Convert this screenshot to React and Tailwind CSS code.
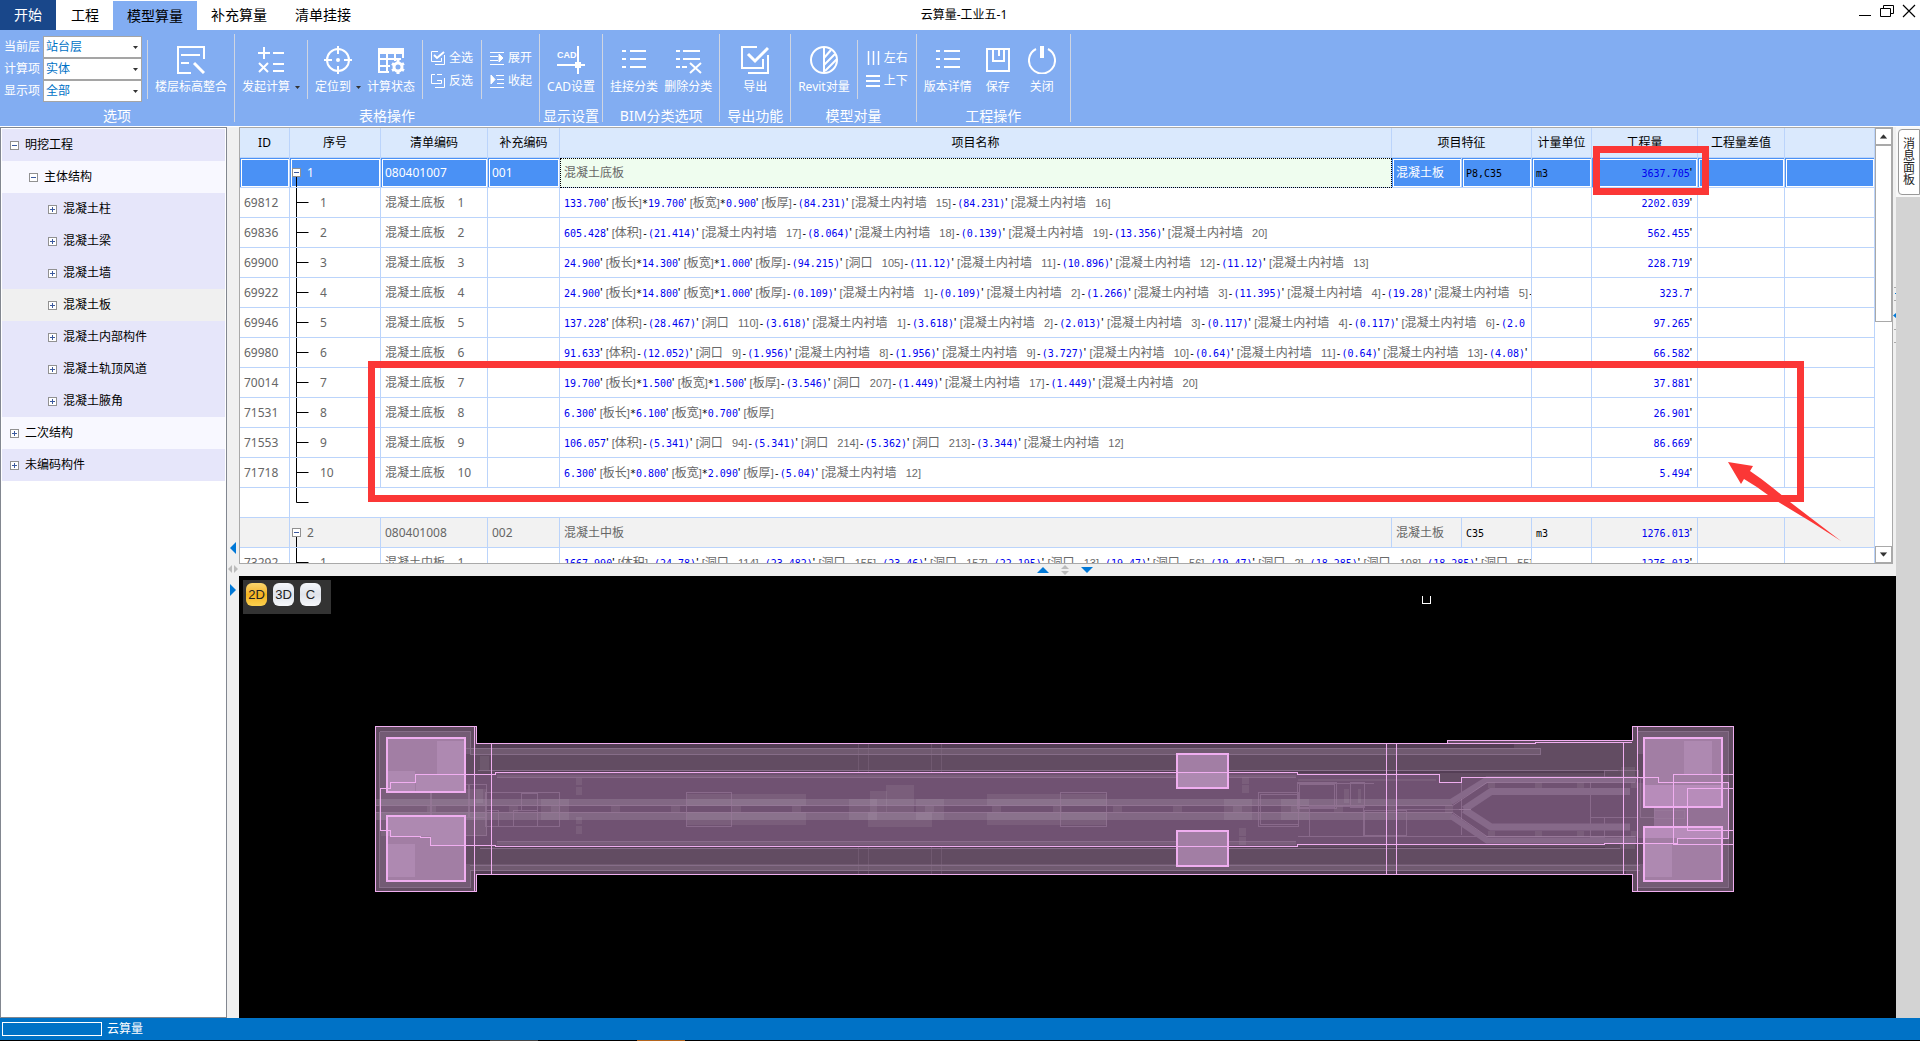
import { useState } from 'react';
import clsx from 'clsx';

const TABS = ['开始', '工程', '模型算量', '补充算量', '清单挂接'];

const FILTERS = [
  { id: 'floor', label: '当前层', value: '站台层' },
  { id: 'calc', label: '计算项', value: '实体' },
  { id: 'show', label: '显示项', value: '全部' },
];

const TREE = [
  { name: '明挖工程', level: 0, open: true, tone: 'dark' },
  { name: '主体结构', level: 1, open: true, tone: 'light' },
  { name: '混凝土柱', level: 2, tone: 'dark' },
  { name: '混凝土梁', level: 2, tone: 'dark' },
  { name: '混凝土墙', level: 2, tone: 'dark' },
  { name: '混凝土板', level: 2, tone: 'active' },
  { name: '混凝土内部构件', level: 2, tone: 'dark' },
  { name: '混凝土轨顶风道', level: 2, tone: 'dark' },
  { name: '混凝土腋角', level: 2, tone: 'dark' },
  { name: '二次结构', level: 0, tone: 'light' },
  { name: '未编码构件', level: 0, tone: 'dark' },
];

const SLABS = [
  {
    id: '69812',
    formula:
      "133.700'[板长]*19.700'[板宽]*0.900'[板厚]-(84.231)'[混凝土内衬墙 15]-(84.231)'[混凝土内衬墙 16]",
    amount: '2202.039',
  },
  {
    id: '69836',
    formula:
      "605.428'[体积]-(21.414)'[混凝土内衬墙 17]-(8.064)'[混凝土内衬墙 18]-(0.139)'[混凝土内衬墙 19]-(13.356)'[混凝土内衬墙 20]",
    amount: '562.455',
  },
  {
    id: '69900',
    formula:
      "24.900'[板长]*14.300'[板宽]*1.000'[板厚]-(94.215)'[洞口 105]-(11.12)'[混凝土内衬墙 11]-(10.896)'[混凝土内衬墙 12]-(11.12)'[混凝土内衬墙 13]",
    amount: '228.719',
  },
  {
    id: '69922',
    formula:
      "24.900'[板长]*14.800'[板宽]*1.000'[板厚]-(0.109)'[混凝土内衬墙 1]-(0.109)'[混凝土内衬墙 2]-(1.266)'[混凝土内衬墙 3]-(11.395)'[混凝土内衬墙 4]-(19.28)'[混凝土内衬墙 5]-",
    amount: '323.7',
  },
  {
    id: '69946',
    formula:
      "137.228'[体积]-(28.467)'[洞口 110]-(3.618)'[混凝土内衬墙 1]-(3.618)'[混凝土内衬墙 2]-(2.013)'[混凝土内衬墙 3]-(0.117)'[混凝土内衬墙 4]-(0.117)'[混凝土内衬墙 6]-(2.0",
    amount: '97.265',
  },
  {
    id: '69980',
    formula:
      "91.633'[体积]-(12.052)'[洞口 9]-(1.956)'[混凝土内衬墙 8]-(1.956)'[混凝土内衬墙 9]-(3.727)'[混凝土内衬墙 10]-(0.64)'[混凝土内衬墙 11]-(0.64)'[混凝土内衬墙 13]-(4.08)'",
    amount: '66.582',
  },
  {
    id: '70014',
    formula:
      "19.700'[板长]*1.500'[板宽]*1.500'[板厚]-(3.546)'[洞口 207]-(1.449)'[混凝土内衬墙 17]-(1.449)'[混凝土内衬墙 20]",
    amount: '37.881',
  },
  {
    id: '71531',
    formula: "6.300'[板长]*6.100'[板宽]*0.700'[板厚]",
    amount: '26.901',
  },
  {
    id: '71553',
    formula:
      "106.057'[体积]-(5.341)'[洞口 94]-(5.341)'[洞口 214]-(5.362)'[洞口 213]-(3.344)'[混凝土内衬墙 12]",
    amount: '86.669',
  },
  {
    id: '71718',
    formula: "6.300'[板长]*0.800'[板宽]*2.090'[板厚]-(5.04)'[混凝土内衬墙 12]",
    amount: '5.494',
  },
];

const MIDDLE_SLAB = {
  id: '73292',
  formula:
    "1667.990'[体积]-(24.78)'[洞口 114]-(23.482)'[洞口 155]-(23.46)'[洞口 157]-(22.195)'[洞口 13]-(19.47)'[洞口 56]-(19.47)'[洞口 2]-(18.285)'[洞口 108]-(18.285)'[洞口 55]-",
  amount: '1276.013',
};

/* ---------- ribbon icons, all on a 28x28 grid ---------- */

const Icon = ({ children }) => (
  <svg
    className="h-7 w-7"
    viewBox="0 0 28 28"
    fill="none"
    stroke="currentColor"
    strokeWidth="2"
  >
    {children}
  </svg>
);

const LevelIcon = () => (
  <Icon>
    <path d="M14 27H1V1h26v12M4 9h19M4 17h8" />
    <path d="M17 17l10 10" strokeWidth="3" />
  </Icon>
);

const CalcIcon = () => (
  <Icon>
    <path d="M7 1v12M1 7h12M16 7h11M16 18h11M16 25h11M2 17l9 9M11 17l-9 9" />
  </Icon>
);

const LocateIcon = () => (
  <Icon>
    <circle cx="14" cy="14" r="11" />
    <path d="M14 0v8M14 20v8M0 14h8M20 14h8" />
    <circle cx="14" cy="14" r="1" />
  </Icon>
);

const StatusIcon = () => (
  <Icon>
    <path d="M2 3h24v4H2z" fill="currentColor" />
    <path d="M2 3v23h10M26 6v6M2 13h22M2 20h11M10 6v20M18 6v9" />
    <circle cx="21" cy="21" r="4" strokeWidth="3" />
    <path
      d="M21 14v3M21 25v3M15 17.500l3 2M24 23l3 1.500M15 24.500l3-1.500M24 19l3-1.500"
      strokeWidth="3"
    />
  </Icon>
);

const CadIcon = () => (
  <Icon>
    <path d="M21 0v28M0 19h28" />
    <path d="M18 16h6v6h-6z" fill="currentColor" stroke="none" />
    <text
      x="0"
      y="12"
      fontSize="9"
      fontFamily="Liberation Sans, sans-serif"
      fontWeight="bold"
      fill="currentColor"
      stroke="none"
    >
      CAD
    </text>
  </Icon>
);

const ListIcon = () => (
  <Icon>
    <path d="M2 5h4M10 5h16M2 13h4M10 13h16M2 21h4M10 21h16" />
  </Icon>
);

const ListDeleteIcon = () => (
  <Icon>
    <path d="M2 5h4M9 5h17M2 13h4M9 13h17M2 21h4M8 21h5M16 17l11 10M27 17L16 27" />
  </Icon>
);

const ExportIcon = () => (
  <Icon>
    <path d="M16 1H1v21h21v-9M27 9v18H7" />
    <path d="M7 8l7 7L27 2" strokeWidth="3" />
  </Icon>
);

const CompareIcon = () => (
  <Icon>
    <circle cx="14" cy="14" r="13" />
    <path d="M14 1v26M14 12l7-8M14 19l11-11M15 25l12-12" />
  </Icon>
);

const SaveIcon = () => (
  <Icon>
    <path d="M3 3h22v22H3zM9 3v12h11V3M15 3v7" />
  </Icon>
);

const PowerIcon = () => (
  <Icon>
    <path d="M8 3a13 13 0 1 0 12 0" />
    <path d="M14 0v12" strokeWidth="4" />
  </Icon>
);

const SmallIcon = ({ children }) => (
  <svg
    className="h-3.5 w-3.5"
    viewBox="0 0 14 14"
    fill="none"
    stroke="currentColor"
  >
    {children}
  </svg>
);

const CheckAllIcon = () => (
  <SmallIcon>
    <path d="M7 .5H.5v10h10V7M13.500 4v9.500H4" />
    <path d="M3 4l3 3 7-6" strokeWidth="2" />
  </SmallIcon>
);

const InvertIcon = () => (
  <SmallIcon>
    <path d="M4 .5H.5v9h10V6M13.500 4v9.500H4M6 .5h5M6 6.500h4.500" />
  </SmallIcon>
);

const UnfoldIcon = () => (
  <SmallIcon>
    <path d="M0 1.500h14M0 5.500h8M0 9.500h8M0 13.500h14" />
    <path d="M9 3v8l4-4z" fill="currentColor" />
  </SmallIcon>
);

const FoldIcon = () => (
  <SmallIcon>
    <path d="M6 1.500h8M7 5.500h7M7 9.500h7M0 13.500h14" />
    <path d="M1 1v9l4-4.500z" fill="currentColor" />
  </SmallIcon>
);

const ColumnsIcon = () => (
  <SmallIcon>
    <path d="M2.500 0v14M7.500 0v14M12.500 0v14" strokeWidth="1.500" />
  </SmallIcon>
);

const RowsIcon = () => (
  <SmallIcon>
    <path d="M0 2h14M0 7h14M0 12h14" strokeWidth="2" />
  </SmallIcon>
);

const Caret = ({ className }) => (
  <svg className={clsx('h-[3px] w-[5px]', className)} viewBox="0 0 5 3">
    <path d="M0 0h5L2.500 3z" fill="#333" />
  </svg>
);

/* ---------- ribbon ---------- */

const Group = ({ title, children }) => (
  <section className="flex h-[88px] flex-col border-r border-[#cfd5e2]">
    <div className="flex flex-1">{children}</div>
    <h2 className="h-3 text-center text-sm leading-3">{title}</h2>
  </section>
);

const Big = ({ icon, label, drop }) => (
  <button
    type="button"
    className="flex flex-col items-center gap-[5px] self-start pt-3"
  >
    {icon}
    <span className="flex items-center gap-[5px] leading-4">
      {label}
      {drop && <Caret />}
    </span>
  </button>
);

const Small = ({ icon, label }) => (
  <button type="button" className="flex items-center gap-1 leading-4">
    {icon}
    {label}
  </button>
);

const Section = ({ children }) => (
  <div className="flex gap-1.5 px-[7px]">{children}</div>
);

const SmallSection = ({ children }) => (
  <div className="flex flex-col gap-[7px] px-2 pt-4">{children}</div>
);

const Rule = () => <div className="mt-1.5 h-[59px] w-px bg-[#cfd5e2]" />;

const Ribbon = () => (
  <div className="flex h-24 shrink-0 whitespace-nowrap bg-[#82adf2] pt-1 text-xs text-white">
    <Group title="选项">
      <div className="flex flex-col pl-1 pr-[5px] pt-0.5">
        {FILTERS.map((f) => (
          <div key={f.id} className="flex h-[22px] items-center gap-[3px]">
            <label htmlFor={f.id} className="w-9">
              {f.label}
            </label>
            <div className="relative">
              <select
                id={f.id}
                defaultValue={f.value}
                className="block h-[22px] w-[99px] appearance-none border border-[#a5a5a5] bg-white pl-0.5 text-xs leading-5 text-[#0072c6]"
              >
                <option>{f.value}</option>
              </select>
              <Caret className="absolute right-1 top-2.5" />
            </div>
          </div>
        ))}
      </div>
      <Rule />
      <Section>
        <Big icon={<LevelIcon />} label="楼层标高整合" />
      </Section>
    </Group>
    <Group title="表格操作">
      <Section>
        <Big icon={<CalcIcon />} label="发起计算" drop />
      </Section>
      <Rule />
      <Section>
        <Big icon={<LocateIcon />} label="定位到" drop />
        <Big icon={<StatusIcon />} label="计算状态" />
      </Section>
      <Rule />
      <SmallSection>
        <Small icon={<CheckAllIcon />} label="全选" />
        <Small icon={<InvertIcon />} label="反选" />
      </SmallSection>
      <Rule />
      <div className="flex flex-col gap-[7px] pl-2 pr-[7px] pt-4">
        <Small icon={<UnfoldIcon />} label="展开" />
        <Small icon={<FoldIcon />} label="收起" />
      </div>
    </Group>
    <Group title="显示设置">
      <Section>
        <Big icon={<CadIcon />} label="CAD设置" />
      </Section>
    </Group>
    <Group title="BIM分类选项">
      <Section>
        <Big icon={<ListIcon />} label="挂接分类" />
        <Big icon={<ListDeleteIcon />} label="删除分类" />
      </Section>
    </Group>
    <Group title="导出功能">
      <div className="flex w-[70px] justify-center">
        <Big icon={<ExportIcon />} label="导出" />
      </div>
    </Group>
    <Group title="模型对量">
      <Section>
        <Big icon={<CompareIcon />} label="Revit对量" />
      </Section>
      <Rule />
      <SmallSection>
        <Small icon={<ColumnsIcon />} label="左右" />
        <Small icon={<RowsIcon />} label="上下" />
      </SmallSection>
    </Group>
    <Group title="工程操作">
      <div className="flex gap-3 pl-[7px] pr-3.5">
        <Big icon={<ListIcon />} label="版本详情" />
        <Big icon={<SaveIcon />} label="保存" />
        <div className="pl-1">
          <Big icon={<PowerIcon />} label="关闭" />
        </div>
      </div>
    </Group>
  </div>
);

const TitleBar = ({ tab, onTab }) => (
  <header className="flex h-[30px] shrink-0 bg-white text-black">
    <nav className="flex flex-1">
      {TABS.map((name, i) => (
        <button
          key={name}
          type="button"
          onClick={() => onTab(name)}
          className={clsx(
            'px-3.5 text-sm leading-5',
            i === 0 && 'mr-px bg-[#19478a] text-white',
            i !== 0 && name === tab && 'mt-px bg-[#82adf2]'
          )}
        >
          {name}
        </button>
      ))}
    </nav>
    <h1 className="self-center pl-3 text-xs">云算量-工业五-1</h1>
    <div className="flex flex-1 items-start justify-end gap-2 pr-1 pt-1">
      <button type="button" aria-label="最小化">
        <svg className="h-3.5 w-3.5" viewBox="0 0 14 14" stroke="#000">
          <path d="M1 11.500h12" />
        </svg>
      </button>
      <button type="button" aria-label="还原">
        <svg
          className="h-3.5 w-3.5"
          viewBox="0 0 14 14"
          stroke="#000"
          fill="none"
        >
          <path d="M.5 4.500h10v8H.5zM3.500 4V1.500h10v8H11" />
        </svg>
      </button>
      <button type="button" aria-label="关闭窗口">
        <svg className="h-3.5 w-3.5" viewBox="0 0 14 14" stroke="#000">
          <path d="M1 1l12 12M13 1L1 13" strokeWidth="1.200" />
        </svg>
      </button>
    </div>
  </header>
);

/* ---------- component tree ---------- */

const Toggle = ({ open }) => (
  <svg className="h-[9px] w-[9px] shrink-0" viewBox="0 0 9 9" fill="none">
    <rect x=".5" y=".5" width="8" height="8" fill="#fff" stroke="#919191" />
    <path d={open ? 'M2 4.500h5' : 'M2 4.500h5M4.500 2v5'} stroke="#3c5a9e" />
  </svg>
);

const Sidebar = () => (
  <aside className="w-[227px] shrink-0 border border-[#828790] bg-white p-px">
    <ul>
      {TREE.map((n) => (
        <li key={n.name}>
          <button
            type="button"
            className={clsx(
              'flex h-8 w-full items-center gap-1.5 text-xs text-black',
              n.level === 0 && 'pl-2',
              n.level === 1 && 'pl-[27px]',
              n.level === 2 && 'pl-[46px]',
              n.tone === 'dark' && 'bg-[#e6e6fa]',
              n.tone === 'light' && 'bg-[#f8f8ff]',
              n.tone === 'active' && 'bg-[#f0f0f0]'
            )}
          >
            <Toggle open={n.open} />
            {n.name}
          </button>
        </li>
      ))}
    </ul>
  </aside>
);

const VerticalSplitter = () => (
  <div className="flex w-3 shrink-0 flex-col items-center justify-center gap-[11px] bg-[#f0f0f0] pb-2">
    <svg className="h-3 w-1.5" viewBox="0 0 6 12">
      <path d="M6 0v12L0 6z" fill="#0078d7" />
    </svg>
    <svg className="h-2 w-2.5" viewBox="0 0 10 8">
      <path d="M4 0v8L0 4zM6 0v8l4-4z" fill="#bbb" />
    </svg>
    <svg className="h-3 w-1.5" viewBox="0 0 6 12">
      <path d="M0 0v12l6-6z" fill="#0078d7" />
    </svg>
  </div>
);

const HorizontalSplitter = () => (
  <div className="flex h-3 shrink-0 items-center justify-center gap-3 bg-[#f0f0f0] pr-1.5">
    <svg className="h-1.5 w-3" viewBox="0 0 12 6">
      <path d="M0 6h12L6 0z" fill="#0078d7" />
    </svg>
    <svg className="h-2.5 w-2" viewBox="0 0 8 10">
      <path d="M0 4h8L4 0zM0 6h8l-4 4z" fill="#bbb" />
    </svg>
    <svg className="h-1.5 w-3" viewBox="0 0 12 6">
      <path d="M0 0h12L6 6z" fill="#0078d7" />
    </svg>
  </div>
);

/* ---------- quantity table ---------- */

const NUM = "font-['DejaVu_Sans_Mono',monospace] text-[10px]";

// "[混凝土内衬墙 15]": the latin parts are set one size down from the name
const Note = ({ text }) => {
  const [name, no] = text.slice(1, -1).split(' ');
  return (
    <span className="text-[11px] text-[#696969]">
      [<span className="text-xs">{name}</span>
      {no && `   ${no}`}]
    </span>
  );
};

// splits a formula into numbers, notes in brackets, quotes and operators
const Formula = ({ text }) => (
  <span className="whitespace-pre font-['Liberation_Sans','Noto_Sans_CJK_SC',sans-serif] text-xs">
    {text.match(/\[[^\]]*\]|[\d.()]+|'|[-*]/g).map((part, i) => {
      if (part[0] === '[') return <Note key={i} text={part} />;
      if (part === "'") return <span key={i}>{"' "}</span>;
      return (
        <span
          key={i}
          className={clsx(NUM, /\d/.test(part) && 'text-[#0000f0]')}
        >
          {part}
        </span>
      );
    })}
  </span>
);

const Amount = ({ value }) => (
  <>
    <span className={clsx(NUM, 'text-[#0000f0]')}>{value}</span>
    <span className="font-['Liberation_Sans',sans-serif] text-black">'</span>
  </>
);

const Td = ({ className, children, ...rest }) => (
  <td
    className={clsx(
      'h-[30px] overflow-hidden whitespace-nowrap border-b border-r border-[#bbd4fb] py-0 pl-1',
      className
    )}
    {...rest}
  >
    {children}
  </td>
);

const Th = ({ children, ...rest }) => (
  <th
    className="h-[30px] whitespace-nowrap border-b border-r border-[#bbd4fb] bg-[#dae9fd] p-0 font-normal text-black"
    {...rest}
  >
    {children}
  </th>
);

const Branch = ({ d }) => (
  <svg
    className="absolute left-0 -top-px h-[31px] w-5"
    viewBox="0 0 20 31"
    fill="none"
    stroke="#000"
  >
    <path d={d} />
  </svg>
);

const GroupRow = ({ no, code, extra, name, spec, amount, selected }) => {
  const cell = selected
    ? 'bg-[#4a91f5] text-white outline outline-1 -outline-offset-2 outline-white'
    : 'bg-[#f2f2f2]';
  return (
    <tr>
      <Td className={cell} />
      <Td className={clsx(cell, 'relative')}>
        <Branch d="M6.500 20v11" />
        <div className="relative -left-0.5 flex items-center gap-1.5">
          <Toggle open />
          {no}
        </div>
      </Td>
      <Td className={cell}>{code}</Td>
      <Td className={cell}>{extra}</Td>
      <Td
        className={
          selected
            ? 'bg-[#effdef] outline-dotted outline-1 -outline-offset-1 outline-black'
            : cell
        }
      >
        {name}
      </Td>
      <Td className={cell}>混凝土板</Td>
      <Td className={cell}>
        <span className={clsx(NUM, 'text-black')}>{spec}</span>
      </Td>
      <Td className={cell}>
        <span className={clsx(NUM, 'text-black')}>m3</span>
      </Td>
      <Td className={clsx(cell, 'pr-[5px] text-right')}>
        <Amount value={amount} />
      </Td>
      <Td className={cell} />
      <Td className={cell} />
    </tr>
  );
};

const ItemRow = ({ item, no, name }) => (
  <tr>
    <Td>{item.id}</Td>
    <Td className="relative">
      <Branch d="M6.500 0v31M6.500 15.500h12" />
      <span className="pl-[26px]">{no}</span>
    </Td>
    <Td>
      <span className="whitespace-pre">
        {name}
        {'    '}
        {no}
      </span>
    </Td>
    <Td />
    <Td colSpan={3} className="text-black">
      <Formula text={item.formula} />
    </Td>
    <Td />
    <Td className="pr-[5px] text-right">
      <Amount value={item.amount} />
    </Td>
    <Td />
    <Td />
  </tr>
);

const QuantityTable = () => (
  <div className="min-w-0 flex-1 overflow-hidden">
    <table className="w-full table-fixed border-separate border-spacing-0 text-xs text-[#666]">
      <colgroup>
        <col className="w-[50px]" />
        <col className="w-[91px]" />
        <col className="w-[107px]" />
        <col className="w-[72px]" />
        <col />
        <col className="w-[70px]" />
        <col className="w-[70px]" />
        <col className="w-[60px]" />
        <col className="w-[106px]" />
        <col className="w-[87px]" />
        <col className="w-[90px]" />
      </colgroup>
      <thead>
        <tr>
          <Th>ID</Th>
          <Th>序号</Th>
          <Th>清单编码</Th>
          <Th>补充编码</Th>
          <Th>项目名称</Th>
          <Th colSpan={2}>项目特征</Th>
          <Th>计量单位</Th>
          <Th>工程量</Th>
          <Th>工程量差值</Th>
          <Th />
        </tr>
      </thead>
      <tbody>
        <GroupRow
          selected
          no="1"
          code="080401007"
          extra="001"
          name="混凝土底板"
          spec="P8,C35"
          amount="3637.705"
        />
        {SLABS.map((item, i) => (
          <ItemRow key={item.id} item={item} no={i + 1} name="混凝土底板" />
        ))}
        <tr>
          <Td />
          <Td colSpan={10} className="relative">
            <Branch d="M6.500 0v15.500h12" />
          </Td>
        </tr>
        <GroupRow
          no="2"
          code="080401008"
          extra="002"
          name="混凝土中板"
          spec="C35"
          amount="1276.013"
        />
        <ItemRow item={MIDDLE_SLAB} no={1} name="混凝土中板" />
      </tbody>
    </table>
  </div>
);

const ScrollBar = () => (
  <div className="flex w-[17px] shrink-0 flex-col bg-white">
    <button
      type="button"
      aria-label="向上滚动"
      className="flex h-[17px] items-center justify-center border border-[#a9a9a9]"
    >
      <Caret className="rotate-180 scale-150" />
    </button>
    <div className="h-[177px] border border-[#a9a9a9]" />
    <div className="flex-1" />
    <button
      type="button"
      aria-label="向下滚动"
      className="flex h-[17px] items-center justify-center border border-[#a9a9a9]"
    >
      <Caret className="scale-150" />
    </button>
  </div>
);

// red frames and the arrow drawn over the table
const Marks = () => (
  <>
    <div className="pointer-events-none absolute right-[183px] top-[18px] h-[49px] w-[116px] border-[7px] border-[#fb3736]" />
    <div className="pointer-events-none absolute left-32 right-[88px] top-[233px] h-[141px] border-[7px] border-[#fb3736]" />
    <svg
      className="pointer-events-none absolute right-[50px] top-[334px] h-20 w-[114px]"
      viewBox="0 0 114 80"
    >
      <path
        d="M0 0l25 4-3 5Q34 17 45 26L62 40 92 63 113 79 85 61 52 41 40 33Q28 24 16 17L13 22z"
        fill="#fb3736"
      />
    </svg>
  </>
);

/* ---------- model view ---------- */

const FEATURES = [
  // platform blocks along the tracks
  [687, 794, 45, 12], [687, 812, 45, 13], [732, 794, 74, 12], [732, 812, 74, 13],
  [987, 794, 74, 12], [987, 812, 74, 13], [1061, 794, 46, 12], [1061, 812, 46, 13],
  [541, 799, 28, 21], [849, 799, 28, 21], [916, 799, 28, 21], [1224, 799, 28, 21], [1281, 799, 28, 21],
  [870, 791, 17, 21], [886, 785, 28, 27], [868, 812, 64, 15],
  [611, 806, 9, 6], [671, 806, 9, 6], [732, 806, 9, 6], [792, 806, 9, 6], [925, 806, 9, 6],
  [992, 806, 9, 6], [1053, 806, 9, 6], [1113, 806, 9, 6], [1173, 806, 9, 6], [1233, 806, 9, 6],
  [576, 778, 6, 7], [576, 787, 6, 8], [576, 817, 6, 7], [576, 826, 6, 8],
  [1242, 777, 7, 7], [1242, 785, 7, 8], [1239, 828, 7, 8], [1239, 837, 7, 8],
  [427, 806, 9, 6], [509, 806, 9, 6], [551, 806, 9, 6], [1291, 806, 9, 6], [1334, 806, 9, 6],
  [1388, 806, 9, 6], [1445, 806, 8, 7],
  [480, 756, 9, 14], [476, 789, 7, 14], [1344, 789, 5, 14], [1358, 789, 3, 14],
  [1488, 782, 7, 6], [1535, 782, 7, 6], [1577, 782, 7, 6], [1631, 782, 6, 6],
  [1488, 831, 7, 6], [1535, 831, 7, 6], [1577, 831, 7, 6], [1631, 831, 6, 6],
  [1621, 767, 14, 10], [1620, 837, 15, 12],
];

const OUTLINES = [
  [485.5, 792.5, 74, 34], [486.5, 810.5, 12, 16], [513.5, 810.5, 24, 16], [521.5, 793.5, 16, 17],
  [430.5, 784.5, 56, 51], [468.5, 784.5, 18, 33], [431.5, 784.5, 38, 33],
  [686.5, 792.5, 45, 34], [1060.5, 792.5, 46, 34],
  [1258.5, 792.5, 40, 34], [1260.5, 794.5, 38, 30],
  [1297.5, 782.5, 39, 26], [1309.5, 806.5, 54, 30], [1299.5, 784.5, 35, 23], [1350.5, 782.5, 14, 25],
  [1364.5, 810.5, 42, 25], [1590.5, 778.5, 47, 39], [1590.5, 817.5, 14, 20],
  [1640.5, 778.5, 14, 39], [1604.5, 770.5, 34, 7], [1654.5, 810.5, 30, 8],
];

const ModelDrawing = () => (
  <svg
    className="absolute inset-0 h-full w-full"
    viewBox="239 576 1657 442"
    fill="none"
    shapeRendering="crispEdges"
  >
    {/* slab body */}
    <path d="M375 726h101v17h971v-3h185v-14h102v166h-102v-17H476v17H375z" fill="#624c62" />
    <path d="M476 743h1038v5H476zM476 871h1150v4H476zM495 847h1110v2H495zM495 771h1110v2H495z" fill="#543e55" />
    <path d="M470 748h1070v6H470zM470 864h1170v6H470z" fill="#705a70" />
    <path
      d="M380 731h90v23h-4v-17h-80v56h-6zM380 888h90v-24h-4v18h-80v-68h-6zM1728 731h-90v23h5v-17h80v71h5zM1728 888h-90v-24h5v18h80v-56h5z"
      fill="#735b74"
    />
    <g stroke="#866d88">
      <path d="M463.500 748.500H1540.500V754.500M470 754.500h1070M478 770.500h1140M480 848.500h1140M470 865.500h1170M470 870.500h1170" />
      <path d="M379.500 731.500h91v23M379.500 887.500h91v-17M1638 731.500h90.500v156H1638M379.500 731.500v156" />
      <path d="M858.500 743v132M868.500 743v132M931.500 743v132M941.500 743v132" opacity=".4" />
    </g>

    {/* centre */}
    <path
      d="M380.500 788.500h10v-6h25v-8h80v-2h802v2h142v8h22v-5h197v5h70v56h-51v5h-73v1h-307v2h-802v-1h-65v-8h-10v-1h-30v-6h-10z"
      fill="#705272"
    />
    <path d="M1654 783h74v55h-74z" fill="#8b678d" />
    <g fill="#fff" fillOpacity=".07">
      <path d="M375 799h1077v7H375zM375 812h1077v8H375z" fillOpacity=".13" />
      <path d="M497 775h799v2H497zM497 842h799v3H497zM1298 779h138v2h-138z" />
      <path d="M381 789h106v47h-106zM1638 783h90v55h-90z" />
      {FEATURES.map(([x, y, w, h]) => (
        <rect key={`${x}-${y}`} x={x} y={y} width={w} height={h} />
      ))}
    </g>
    <g stroke="#9b7b9c" opacity=".6">
      {OUTLINES.map(([x, y, w, h]) => (
        <rect key={`${x}-${y}-${w}`} x={x} y={y} width={w} height={h} />
      ))}
      <path d="M375 805.500h1077M375 812.500h1077M1397 809.500h68M1406.500 810v26M1461.500 778v57M1298 836.500h338M1298 783.500h76M497 777.500h799M497 841.500h799" />
    </g>
    {/* track fork */}
    <g stroke="#866989" shapeRendering="auto">
      <path d="M1451 802l36-22.500h149M1451 816l36 24.500h149" strokeWidth="6" />
      <path d="M1464 809.500l27-18h139M1464 809.500l27 17.500h139" strokeWidth="7" />
      <path d="M1452 806l35-23.500h148M1452 812l35 24.500h148M1459 809.500h12" stroke="#a384a5" opacity=".6" />
    </g>

    {/* openings */}
    <g fill="#a27ea4" stroke="#f0aef0" strokeWidth="2">
      <path d="M387 738h78v54h-78zM387 816h78v65h-78zM1644 738h78v69h-78zM1644 827h78v54h-78zM1177 754h51v34h-51zM1177 831h51v35h-51z" />
    </g>
    <g fill="#ae89b1">
      <path d="M437 741h27v33h-27zM388 771h27v20h-27zM388 844h27v33h-27zM1684 741h28v33h-28zM1645 844h27v33h-27zM416 775h48v16h-48zM388 817h59v19h-59zM431 817h33v28h-33zM1178 773h49v14h-49z" />
      <path d="M1645 785h76v21h-76zM1645 828h76v10h-76z" fill="#b78cba" />
    </g>

    {/* bright edges */}
    <g stroke="#f0aef0">
      <path d="M375.500 726.500h101v17h971v-3h185v-14h101v165h-101v-17h-1156v17h-101zM1447 743.500h88v-1h97" />
      <path d="M380.500 788.500h10v-6h25v-8h80v-2h802v2h142v8h22v-5h197v5h70v56h-51v5h-73v1h-307v2h-802v-1h-65v-8h-10v-1h-30v-6h-10z" />
      <path d="M474.500 726v166M491.500 743v132M1386.500 743v132M1396.500 743v132M1623.500 742v133M1637.500 726v166" />
      <path d="M1734 774.500h-60.500v70h60.500M1734 788.500h-46.500v42h46.500" />
    </g>
    <path d="M1422.500 596v7h8v-7" stroke="#fff" />
  </svg>
);

const ModelView = () => {
  const [mode, setMode] = useState('2D');
  return (
    <div className="relative min-h-0 flex-1 bg-black">
      <ModelDrawing />
      <div className="absolute left-1 top-1 flex h-[34px] w-[88px] gap-1.5 bg-[#333] pl-[3px] pt-[3px]">
        {['2D', '3D', 'C'].map((m) => (
          <button
            key={m}
            type="button"
            onClick={() => setMode(m)}
            className={clsx(
              "h-[23px] w-[21px] rounded-md bg-linear-to-b text-center font-['Liberation_Sans',sans-serif] text-[13px] leading-6 text-[#222]",
              mode === m
                ? 'from-[#fbd66c] via-[#f3b31c] to-[#fbd04e]'
                : 'from-[#f4f6fa] via-[#dfe3ea] to-[#f6f8fb]'
            )}
          >
            {m}
          </button>
        ))}
      </div>
    </div>
  );
};

const SideDock = () => (
  <div className="flex w-6 shrink-0 flex-col bg-[#d3d3d3]">
    <div className="bg-[#f8f8f8] py-0.5 pl-0.5">
      <button
        type="button"
        className="flex h-[66px] w-full flex-col items-center justify-center rounded-l-sm border border-[#999] bg-white text-xs leading-3 text-[#222]"
      >
        <span className="w-3">消息面板</span>
      </button>
    </div>
  </div>
);

const StatusBar = () => (
  <footer className="shrink-0 bg-[#0072c6]">
    <div className="flex h-[22px] items-center gap-[5px] pl-0.5 text-xs text-white">
      <div className="h-3.5 w-[100px] border border-white" />
      云算量
    </div>
    <div className="flex h-px bg-black">
      <div className="ml-[490px] w-12 bg-[#444]" />
      <div className="ml-[99px] w-12 bg-[#b5651d]" />
    </div>
  </footer>
);

const App = () => {
  const [tab, setTab] = useState('模型算量');

  return (
    <div className="flex h-screen flex-col overflow-hidden bg-[#f0f0f0] font-['Noto_Sans','Noto_Sans_CJK_SC',sans-serif]">
      <TitleBar tab={tab} onTab={setTab} />
      <Ribbon />
      <main className="flex min-h-0 flex-1 border-t border-white">
        <Sidebar />
        <VerticalSplitter />
        <div className="flex min-w-0 flex-1 flex-col">
          <div className="flex h-[437px] shrink-0">
            <div className="relative flex min-w-0 flex-1 border border-[#a9a9a9] bg-white">
              <QuantityTable />
              <ScrollBar />
              <Marks />
            </div>
            <svg
              className="mt-40 h-14 w-[3px] shrink-0"
              viewBox="0 0 3 56"
              fill="none"
            >
              <path d="M1 .5h2M1 13.500h2M1 42.500h2M1 55.500h2" stroke="#aaa" />
              <path d="M3 26v5L0 28.500zM2 6h1v1H2z" fill="#0078d7" />
            </svg>
          </div>
          <HorizontalSplitter />
          <ModelView />
        </div>
        <SideDock />
      </main>
      <StatusBar />
    </div>
  );
};

export default App;
